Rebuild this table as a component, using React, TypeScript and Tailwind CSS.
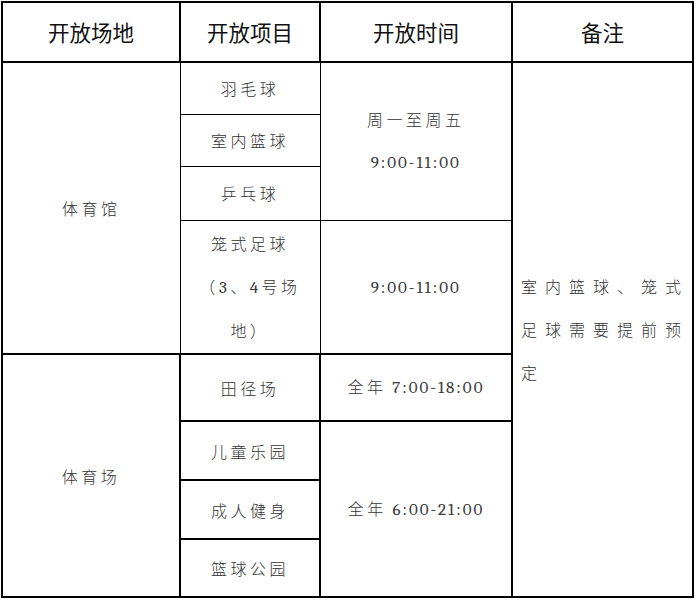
import React from "react";

const cjk = "font-['Noto_Sans_CJK_SC',sans-serif]";
const body = `${cjk} text-[16px] font-light text-[#333] tracking-[3.5px] text-center align-middle`;
const num = "font-serif text-[17px] tracking-[2px] text-[#3a3a3a] font-normal";

export default function App() {
  return (
    <div className="bg-white w-[696px] h-[601px] pt-[1px] pl-[1px]">
      <table className="border-collapse table-fixed w-[691px] border-2 border-black">
        <colgroup>
          <col className="w-[178px]" />
          <col className="w-[140px]" />
          <col className="w-[192px]" />
          <col className="w-[181px]" />
        </colgroup>
        <thead>
          <tr className="h-[60px]">
            {["开放场地", "开放项目", "开放时间", "备注"].map((h) => (
              <th
                key={h}
                className={`${cjk} border-2 border-black text-[21.5px] font-normal text-[#111] text-center align-middle`}
              >
                {h}
              </th>
            ))}
          </tr>
        </thead>
        <tbody>
          <tr className="h-[52px]">
            <td rowSpan={4} className={`${body} border border-black`}>
              体育馆
            </td>
            <td className={`${body} border border-black`}>羽毛球</td>
            <td rowSpan={3} className={`${body} border border-black leading-[43px]`}>
              <div>周一至周五</div>
              <div className={num}>9:00-11:00</div>
            </td>
            <td rowSpan={8} className={`${cjk} border-2 border-black text-[16px] font-light text-[#333] tracking-[8px] leading-[43px] text-left align-middle pl-[8px]`}>
              <div>室内篮球、笼式</div>
              <div>足球需要提前预</div>
              <div>定</div>
            </td>
          </tr>
          <tr className="h-[52px]">
            <td className={`${body} border border-black`}>室内篮球</td>
          </tr>
          <tr className="h-[54px]">
            <td className={`${body} border border-black`}>乒乓球</td>
          </tr>
          <tr className="h-[134px]">
            <td className={`${body} border border-black leading-[43px]`}>
              <div>笼式足球</div>
              <div>
                （<span className="font-serif text-[17px]">3</span>、<span className="font-serif text-[17px]">4</span>号场
              </div>
              <div>地）</div>
            </td>
            <td className={`${body} border border-black`}>
              <span className={num}>9:00-11:00</span>
            </td>
          </tr>
          <tr className="h-[67px]">
            <td rowSpan={4} className={`${body} border-2 border-black`}>
              体育场
            </td>
            <td className={`${body} border-2 border-black`}>田径场</td>
            <td className={`${body} border-2 border-black`}>
              全年<span className={num}> 7:00-18:00</span>
            </td>
          </tr>
          <tr className="h-[59px]">
            <td className={`${body} border-2 border-black`}>儿童乐园</td>
            <td rowSpan={3} className={`${body} border-2 border-black`}>
              全年<span className={num}> 6:00-21:00</span>
            </td>
          </tr>
          <tr className="h-[59px]">
            <td className={`${body} border-2 border-black`}>成人健身</td>
          </tr>
          <tr className="h-[58px]">
            <td className={`${body} border-2 border-black`}>篮球公园</td>
          </tr>
        </tbody>
      </table>
    </div>
  );
}
